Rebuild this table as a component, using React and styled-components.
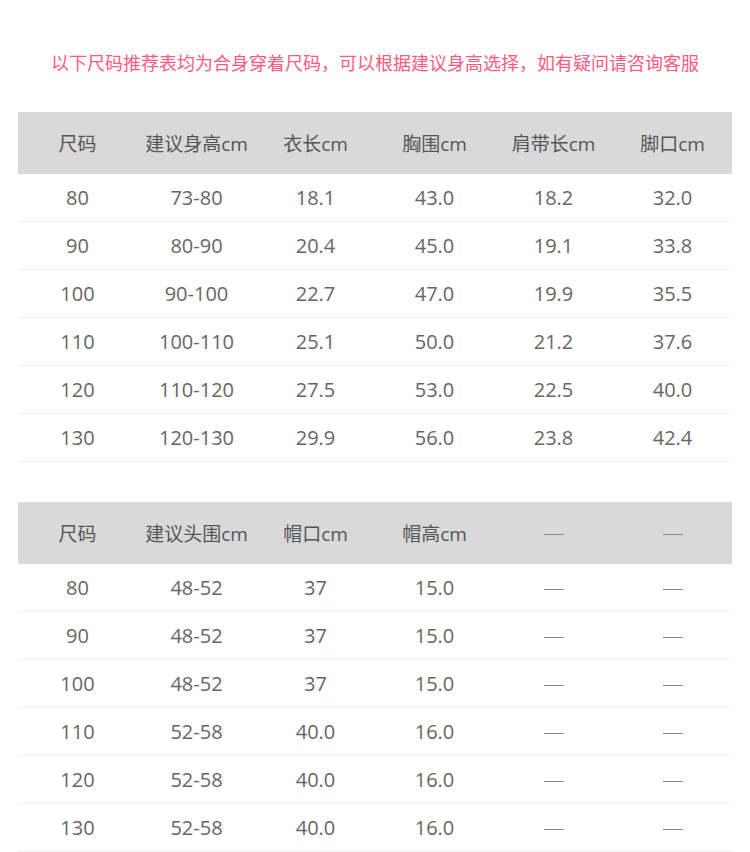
import React from "react";
import styled, { createGlobalStyle } from "styled-components";

const GlobalStyle = createGlobalStyle`
  body {
    margin: 0;
    background: #fff;
    font-family: "Open Sans", "Noto Sans CJK SC", sans-serif;
  }
`;

const Page = styled.div`
  width: 750px;
  padding: 0 18px;
  box-sizing: border-box;
`;

const Notice = styled.p`
  margin: 0;
  padding-top: 50px;
  height: 24px;
  line-height: 24px;
  text-align: center;
  font-size: 18px;
  color: #ff5a80;
  font-family: "Noto Sans CJK SC", sans-serif;
`;

const Table = styled.table`
  width: 714px;
  border-collapse: collapse;
  table-layout: fixed;
  margin-top: ${(props) => props.gap}px;
  color: #666;
`;

const Th = styled.th`
  height: 62px;
  padding: 0;
  background: #d9d9d9;
  font-weight: normal;
  font-size: 19px;
  color: #555;
  text-align: center;
`;

const Td = styled.td`
  height: 47px;
  padding: 0;
  font-size: 20px;
  text-align: center;
  border-bottom: 1px solid #eeeeee;
`;

const Dash = styled.span`
  display: inline-block;
  width: 20px;
  height: 1px;
  background: #888;
  vertical-align: middle;
`;

const sizeHead = ["尺码", "建议身高cm", "衣长cm", "胸围cm", "肩带长cm", "脚口cm"];
const sizeRows = [
  ["80", "73-80", "18.1", "43.0", "18.2", "32.0"],
  ["90", "80-90", "20.4", "45.0", "19.1", "33.8"],
  ["100", "90-100", "22.7", "47.0", "19.9", "35.5"],
  ["110", "100-110", "25.1", "50.0", "21.2", "37.6"],
  ["120", "110-120", "27.5", "53.0", "22.5", "40.0"],
  ["130", "120-130", "29.9", "56.0", "23.8", "42.4"],
];

const hatHead = ["尺码", "建议头围cm", "帽口cm", "帽高cm", "-", "-"];
const hatRows = [
  ["80", "48-52", "37", "15.0", "-", "-"],
  ["90", "48-52", "37", "15.0", "-", "-"],
  ["100", "48-52", "37", "15.0", "-", "-"],
  ["110", "52-58", "40.0", "16.0", "-", "-"],
  ["120", "52-58", "40.0", "16.0", "-", "-"],
  ["130", "52-58", "40.0", "16.0", "-", "-"],
];

const cell = (v) => (v === "-" ? <Dash aria-label="—" /> : v);

const SizeTable = ({ head, rows, gap }) => (
  <Table gap={gap}>
    <thead>
      <tr>
        {head.map((h, i) => (
          <Th key={i}>{cell(h)}</Th>
        ))}
      </tr>
    </thead>
    <tbody>
      {rows.map((row, i) => (
        <tr key={i}>
          {row.map((v, j) => (
            <Td key={j}>{cell(v)}</Td>
          ))}
        </tr>
      ))}
    </tbody>
  </Table>
);

export default function App() {
  return (
    <Page>
      <GlobalStyle />
      <Notice>以下尺码推荐表均为合身穿着尺码，可以根据建议身高选择，如有疑问请咨询客服</Notice>
      <SizeTable head={sizeHead} rows={sizeRows} gap={38} />
      <SizeTable head={hatHead} rows={hatRows} gap={40} />
    </Page>
  );
}
